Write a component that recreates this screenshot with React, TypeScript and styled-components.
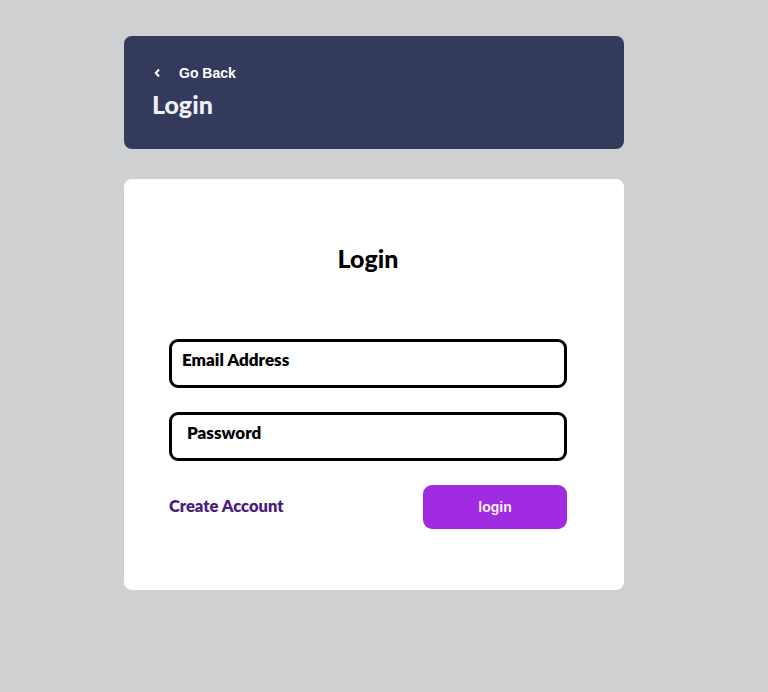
import React from "react";
import styled, { createGlobalStyle } from "styled-components";

const Global = createGlobalStyle`
  html, body { margin: 0; padding: 0; background: #cfd0d2; }
  body { font-family: "Lato", "Noto Sans", sans-serif; }
  * { box-sizing: border-box; }
`;

const Page = styled.div`
  width: 768px;
  min-height: 692px;
  padding-top: 36px;
  display: flex;
  flex-direction: column;
  align-items: center;
  gap: 30px;
  padding-right: 20px;
`;

const Header = styled.header`
  width: 500px;
  height: 113px;
  background: #333a5c;
  border-radius: 8px;
  padding: 29px 28px 0;
  display: flex;
  flex-direction: column;
`;

const BackLink = styled.a`
  display: flex;
  align-items: center;
  gap: 18px;
  height: 16px;
  color: #ffffff;
  font-family: "Liberation Sans", Arial, sans-serif;
  font-weight: 700;
  font-size: 14px;
  text-decoration: none;
  padding-left: 2px;
`;

const HeaderTitle = styled.h1`
  margin: 8px 0 0;
  color: #eef0fa;
  font-family: "Lato", sans-serif;
  font-weight: 900;
  font-size: 25px;
  line-height: 30px;
`;

const Card = styled.main`
  width: 500px;
  height: 411px;
  background: #ffffff;
  border-radius: 8px;
  padding: 64px 57px 0 45px;
  display: flex;
  flex-direction: column;
`;

const CardTitle = styled.h2`
  margin: 0;
  text-align: center;
  font-family: "Lato", sans-serif;
  font-weight: 900;
  font-size: 25px;
  line-height: 30px;
  color: #000;
`;

const Form = styled.form`
  margin-top: 66px;
  display: flex;
  flex-direction: column;
  gap: 24px;
`;

const Field = styled.div<{ $pad: number }>`
  height: 49px;
  border: 3px solid #000;
  border-radius: 9px;
  padding: 8px 10px 0 ${(p) => p.$pad}px;
  font-family: "Lato", sans-serif;
  font-weight: 800;
  font-size: 17px;
  line-height: 20px;
  color: #000;
`;

const Actions = styled.div`
  display: flex;
  align-items: center;
  justify-content: space-between;
`;

const CreateLink = styled.a`
  color: #4b1b7d;
  font-family: "Lato", sans-serif;
  font-weight: 800;
  font-size: 16.5px;
  line-height: 20px;
  margin-top: -3px;
  text-decoration: none;
`;

const LoginButton = styled.button`
  width: 144px;
  height: 44px;
  border: none;
  border-radius: 9px;
  background: #a12be3;
  color: #f7eefc;
  font-family: "Liberation Sans", Arial, sans-serif;
  font-weight: 700;
  font-size: 14px;
`;

export default function App() {
  return (
    <>
      <Global />
      <Page>
        <Header>
          <BackLink href="#">
            <svg width="7" height="10" viewBox="0 0 7 10">
              <path d="M5 1.5 L1.8 5 L5 8.5" fill="none" stroke="#fff" strokeWidth="2" />
            </svg>
            Go Back
          </BackLink>
          <HeaderTitle>Login</HeaderTitle>
        </Header>
        <Card>
          <CardTitle>Login</CardTitle>
          <Form onSubmit={(e) => e.preventDefault()}>
            <Field $pad={10}>Email Address</Field>
            <Field $pad={15}>Password</Field>
            <Actions>
              <CreateLink href="#">Create Account</CreateLink>
              <LoginButton type="submit">login</LoginButton>
            </Actions>
          </Form>
        </Card>
      </Page>
    </>
  );
}
